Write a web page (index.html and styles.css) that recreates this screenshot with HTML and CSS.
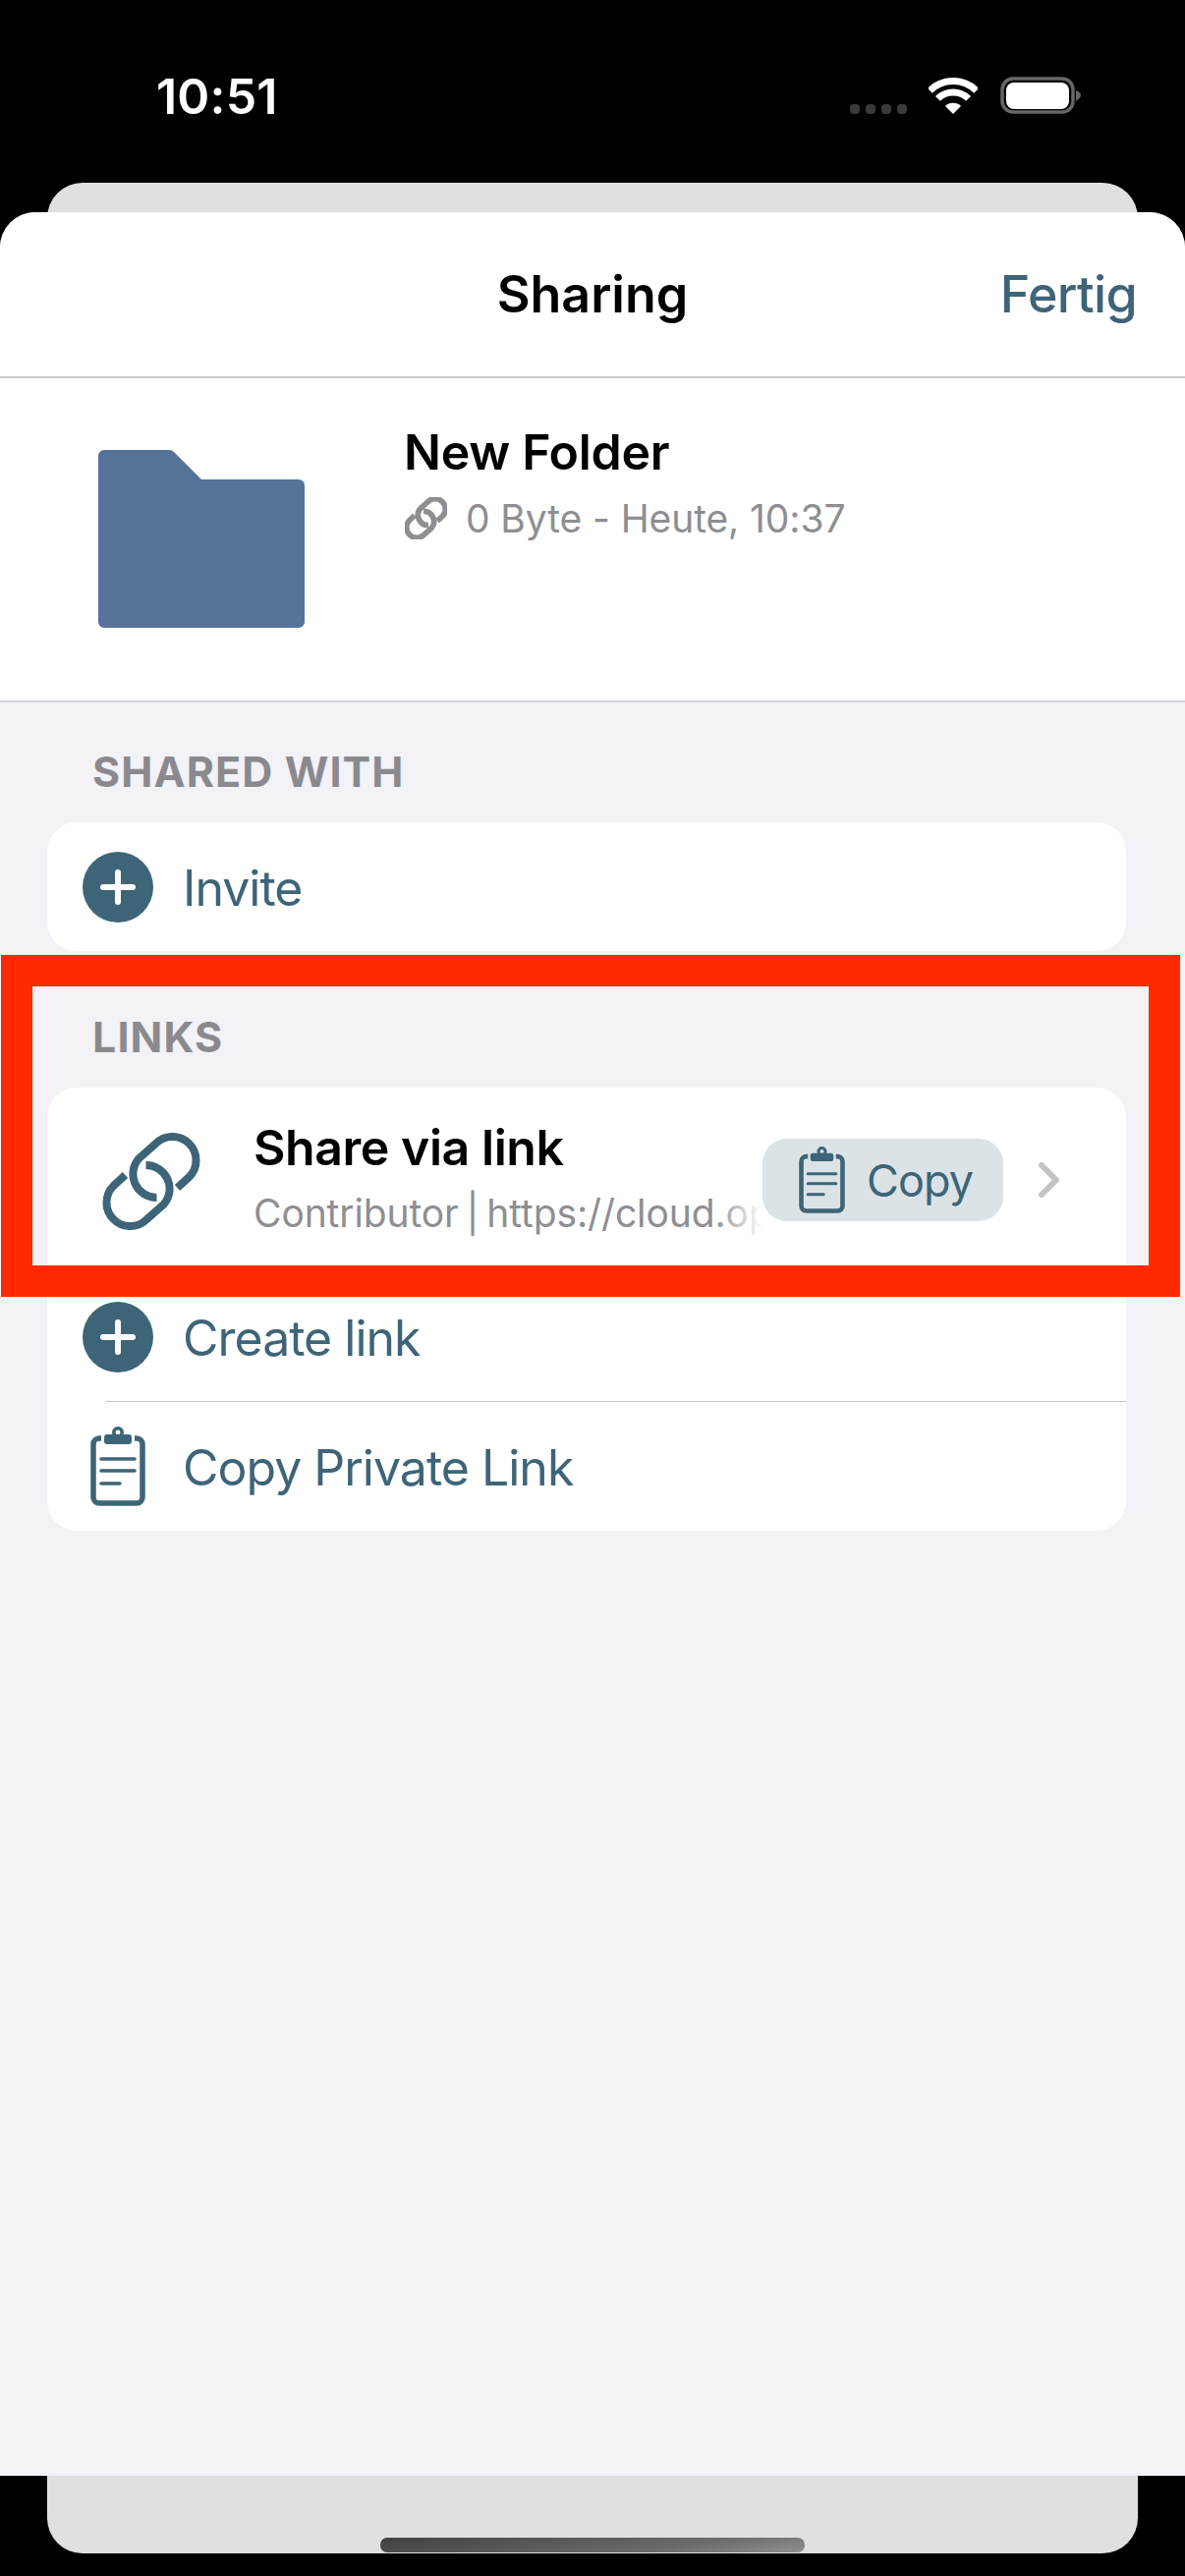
FILE: index.html
```html
<!DOCTYPE html>
<html lang="en">
<head>
  <meta charset="UTF-8">
  <meta name="viewport" content="width=device-width, initial-scale=1.0">
  <title>Sharing</title>
  <link rel="stylesheet" href="styles.css">
</head>
<body>
  <svg class="defs" width="0" height="0">
    <symbol id="chain" viewBox="2 0 99 99">
      <path d="M78 56 L90 45 A24 24 0 0 0 56 11 L39 26 A24 24 0 0 0 57 66" fill="none"/>
      <path d="M25 43 L13 54 A24 24 0 0 0 47 88 L64 73 A24 24 0 0 0 46 33" fill="none"/>
    </symbol>
    <symbol id="clipboard" viewBox="0 0 56 81">
      <path d="M11 12 H9 A6 6 0 0 0 3 18 V72 A6 6 0 0 0 9 78 H47 A6 6 0 0 0 53 72 V18 A6 6 0 0 0 47 12 H45" fill="none" stroke="#3e6577" stroke-width="5.5"/>
      <rect x="14" y="8" width="28" height="10" rx="3" fill="#3e6577"/>
      <circle cx="28" cy="6" r="4.2" fill="none" stroke="#3e6577" stroke-width="3.6"/>
      <path d="M11 33 H45 M11 45 H45 M11 58 H30" fill="none" stroke="#3e6577" stroke-width="3.6" stroke-linecap="round"/>
    </symbol>
    <symbol id="plus" viewBox="0 0 72 72">
      <circle cx="36" cy="36" r="36" fill="#3e6577"/>
      <path d="M21 36 H51 M36 21 V51" stroke="#fff" stroke-width="6" stroke-linecap="round"/>
    </symbol>
  </svg>

  <div class="screen">
    <div class="status-bar">
      <span class="time">10:51</span>
      <div class="status-icons">
        <div class="signal"><i></i><i></i><i></i><i></i></div>
        <svg class="wifi" width="50" height="37" viewBox="0 0 50 37">
          <path d="M1.3 13.3 A33.5 33.5 0 0 1 48.7 13.3" fill="none" stroke="#fff" stroke-width="7"/>
          <path d="M9.4 21.4 A22 22 0 0 1 40.6 21.4" fill="none" stroke="#fff" stroke-width="7"/>
          <path d="M25 37 L17 29 A11.3 11.3 0 0 1 33 29 Z" fill="#fff"/>
        </svg>
        <svg class="battery" width="82" height="38" viewBox="0 0 82 38">
          <rect x="2" y="2" width="72" height="34" rx="11" fill="none" stroke="#666" stroke-width="3.5"/>
          <rect x="6" y="6" width="64" height="27" rx="8" fill="#fff"/>
          <path d="M77 14 C80 15 82 17 82 19 C82 21 80 23 77 25 Z" fill="#666"/>
        </svg>
      </div>
    </div>

    <div class="back-card">
      <div class="sheet">
        <header class="sheet-header">
          <span></span>
          <h1 class="sheet-title">Sharing</h1>
          <a class="done">Fertig</a>
        </header>

        <section class="file-info">
          <svg class="folder" width="210" height="181" viewBox="0 0 210 181">
            <path d="M6 0 H72 Q75 0 77 2 L105 30 H204 A6 6 0 0 1 210 36 V175 A6 6 0 0 1 204 181 H6 A6 6 0 0 1 0 175 V6 A6 6 0 0 1 6 0 Z" fill="#557299"/>
          </svg>
          <div>
            <div class="file-name">New Folder</div>
            <div class="file-meta">
              <svg class="meta-link"><use href="#chain"/></svg>
              <span>0 Byte - Heute, 10:37</span>
            </div>
          </div>
        </section>

        <h2 class="section-label">SHARED WITH</h2>
        <div class="card">
          <div class="row">
            <svg class="row-icon" width="72" height="72"><use href="#plus"/></svg>
            <span class="row-text">Invite</span>
          </div>
        </div>

        <h2 class="section-label links-label">LINKS</h2>
        <div class="card">
          <div class="link-row">
            <svg class="link-icon"><use href="#chain"/></svg>
            <div class="link-text">
              <div class="link-title">Share via link</div>
              <div class="link-sub">Contributor | https://cloud.op</div>
            </div>
            <button class="copy-btn">
              <svg width="47" height="68"><use href="#clipboard"/></svg>
              <span>Copy</span>
            </button>
            <svg class="chevron" width="22" height="36" viewBox="0 0 22 36">
              <path d="M3 3 L18 18 L3 33" fill="none" stroke="#c4c4c6" stroke-width="6" stroke-linecap="round" stroke-linejoin="round"/>
            </svg>
          </div>
          <div class="row">
            <svg class="row-icon" width="72" height="72"><use href="#plus"/></svg>
            <span class="row-text">Create link</span>
          </div>
          <div class="divider"></div>
          <div class="row">
            <svg class="row-icon clip-icon" width="56" height="81"><use href="#clipboard"/></svg>
            <span class="row-text">Copy Private Link</span>
          </div>
        </div>
      </div>
      <div class="home-bar"></div>
    </div>

    <div class="highlight"></div>
  </div>
</body>
</html>
```

FILE: styles.css
```css
* {
  box-sizing: border-box;
}
html, body {
  margin: 0;
  padding: 0;
}
body {
  background-color: #000;
  font-family: Inter, "Noto Sans", sans-serif;
  overflow: hidden;
}
.defs {
  position: absolute;
}
.screen {
  position: relative;
  width: 1206px;
  height: 2622px;
}

/* status bar */
.status-bar {
  height: 186px;
  display: flex;
  justify-content: space-between;
  align-items: flex-start;
  padding: 78px 106px 0 159px;
}
.time {
  color: #fff;
  font-size: 50px;
  font-weight: 600;
  line-height: 40px;
  letter-spacing: 0.2px;
}
.status-icons {
  display: flex;
  align-items: flex-start;
  gap: 22px;
}
.signal {
  display: flex;
  gap: 6px;
  margin-top: 28px;
}
.signal i {
  width: 10px;
  height: 10px;
  border-radius: 4px;
  background-color: #3a3a3c;
}
.wifi {
  margin-top: 1px;
}
.battery {
  margin-left: 1px;
}

/* stacked sheets */
.back-card {
  height: 2413px;
  margin: 0 48px;
  padding-top: 30px;
  background-color: #e0e0e0;
  border-radius: 36px;
}
.sheet {
  height: 2304px;
  margin: 0 -48px;
  background-color: #f2f2f7;
  border-radius: 36px 36px 0 0;
  overflow: hidden;
}
.home-bar {
  width: 432px;
  height: 15px;
  margin: 63px auto 0;
  border-radius: 7px;
  background: linear-gradient(170deg, #414141, #6c6c6c 70%, #909090);
}

/* header */
.sheet-header {
  height: 169px;
  display: grid;
  grid-template-columns: 1fr auto 1fr;
  align-items: center;
  padding: 0 50px;
  background-color: #fff;
  border-bottom: 2px solid #c9c9cb;
}
.sheet-title {
  margin: 0;
  color: #000;
  font-size: 52px;
  font-weight: 600;
  letter-spacing: 0;
}
.done {
  justify-self: end;
  margin-right: -1px;
  color: #3e6577;
  font-size: 52px;
  font-weight: 500;
  letter-spacing: -0.7px;
}

/* file info */
.file-info {
  height: 330px;
  display: flex;
  align-items: flex-start;
  gap: 101px;
  padding: 45px 0 0 100px;
  background-color: #fff;
  border-bottom: 2px solid #d6d6da;
}
.folder {
  margin-top: 28px;
}
.file-name {
  color: #000;
  font-size: 50px;
  font-weight: 600;
  line-height: 60px;
  letter-spacing: -0.3px;
}
.file-meta {
  display: flex;
  align-items: center;
  gap: 19px;
  height: 60px;
  margin-top: 7px;
  color: #8e8e93;
  font-size: 39px;
  letter-spacing: -0.1px;
}
.meta-link {
  width: 43px;
  height: 43px;
  margin-left: 1px;
  stroke: #8e8e93;
  stroke-width: 13;
}

/* sections */
.section-label {
  margin: 0;
  padding: 45px 0 27px 94px;
  color: #8a8a8e;
  font-size: 43px;
  font-weight: 700;
  line-height: 50px;
  letter-spacing: 1.1px;
}
.links-label {
  padding-top: 62px;
}
.card {
  margin: 0 60px 0 48px;
  background-color: #fff;
  border-radius: 30px;
  overflow: hidden;
}
.row {
  height: 131px;
  display: flex;
  align-items: center;
  gap: 30px;
  padding-left: 36px;
}
.row-text {
  margin-top: 2px;
  color: #3e6577;
  font-size: 50px;
  letter-spacing: -1px;
}
.clip-icon {
  margin: 0 8px;
}
.divider {
  height: 1px;
  margin-left: 60px;
  background-color: #c6c6c8;
}

/* link row */
.link-row {
  height: 188px;
  display: flex;
  align-items: center;
  padding: 0 67px 0 56px;
}
.link-icon {
  flex: none;
  width: 100px;
  height: 99px;
  margin-top: 2px;
  stroke: #3e6577;
  stroke-width: 8;
}
.link-text {
  flex: 1;
  min-width: 0;
  margin: 3px 0 0 54px;
}
.link-title {
  color: #000;
  font-size: 50px;
  font-weight: 600;
  line-height: 64px;
  letter-spacing: -0.45px;
}
.link-sub {
  position: relative;
  color: #8e8e93;
  font-size: 39px;
  line-height: 70px;
  word-spacing: -3px;
  letter-spacing: -0.1px;
  white-space: nowrap;
  overflow: hidden;
}
.link-sub::after {
  content: "";
  position: absolute;
  top: 0;
  right: 0;
  bottom: 0;
  width: 50px;
  background: linear-gradient(90deg, rgba(255, 255, 255, 0), #fff);
}
.copy-btn {
  flex: none;
  width: 245px;
  height: 84px;
  display: flex;
  align-items: center;
  gap: 22px;
  padding: 0 0 0 37px;
  border: none;
  border-radius: 25px;
  background-color: #dbe3e7;
  color: #3e6577;
  font-family: inherit;
  font-size: 45px;
  letter-spacing: -0.9px;
}
.chevron {
  flex: none;
  margin-left: 36px;
}

/* red annotation frame */
.highlight {
  position: absolute;
  left: 1px;
  top: 972px;
  width: 1200px;
  height: 348px;
  border: 32px solid #ff2a00;
}
```
